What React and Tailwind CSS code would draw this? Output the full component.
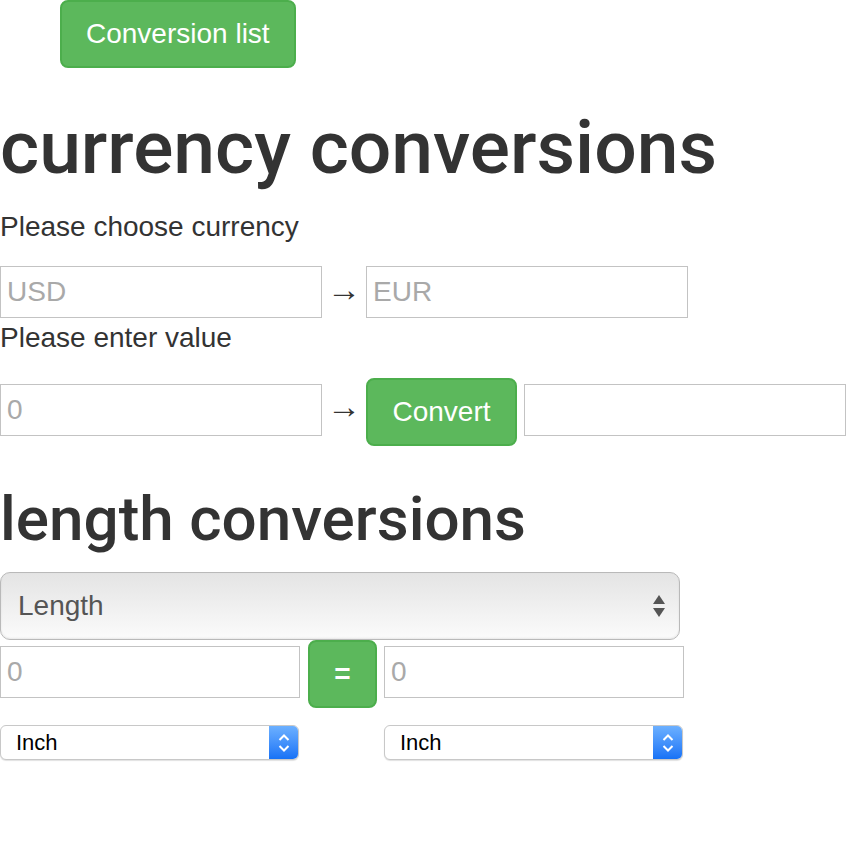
import React from "react";

const font = { fontFamily: '"Liberation Sans", Arial, sans-serif' };
const headFont = { fontFamily: 'Roboto, "Liberation Sans", Arial, sans-serif' };

function UpDown() {
  return (
    <svg width="14" height="26" viewBox="0 0 14 26">
      <path d="M7 2 L13 11 L1 11 Z" fill="#555" />
      <path d="M1 15 L13 15 L7 24 Z" fill="#555" />
    </svg>
  );
}

function Chevrons() {
  return (
    <svg width="14" height="22" viewBox="0 0 14 22">
      <path d="M2.5 8 L7 3.5 L11.5 8" fill="none" stroke="white" strokeWidth="2" />
      <path d="M2.5 14 L7 18.5 L11.5 14" fill="none" stroke="white" strokeWidth="2" />
    </svg>
  );
}

function InchSelect() {
  return (
    <div className="flex h-[35px] w-[299px] items-center overflow-hidden rounded-[6px] border border-[#c8c8c8] bg-white shadow-[0_1px_1px_rgba(0,0,0,0.12)]">
      <span className="flex-1 pl-[15px] text-[22px] text-black">Inch</span>
      <div className="flex h-full w-[29px] items-center justify-center bg-gradient-to-b from-[#6cb0ff] to-[#1672f6]">
        <Chevrons />
      </div>
    </div>
  );
}

export default function App() {
  return (
    <div className="min-h-[866px] w-[858px] bg-white text-[#333]" style={font}>
      <div className="pl-[60px]">
        <button className="h-[68px] rounded-[8px] border-2 border-[#4cae4c] bg-[#5cb85c] px-[24px] text-[28px] leading-[40px] text-white">
          Conversion list
        </button>
      </div>

      <h1 className="mt-[40px] mb-[20px] text-[75px] font-medium leading-[79px] text-[#333]" style={headFont}>
        currency conversions
      </h1>
      <div className="text-[28px] leading-[40px]">Please choose currency</div>
      <div className="mt-[19px] flex items-center">
        <div className="flex h-[52px] w-[322px] items-center border border-[#c3c3c3] pl-[6px] text-[28px] text-[#a9a9a9]">USD</div>
        <span className="mb-[6px] w-[44px] text-center text-[34px] leading-[40px]">→</span>
        <div className="flex h-[52px] w-[322px] items-center border border-[#c3c3c3] pl-[6px] text-[28px] text-[#a9a9a9]">EUR</div>
      </div>
      <div className="text-[28px] leading-[40px]">Please enter value</div>
      <div className="mt-[20px] flex items-start">
        <div className="mt-[6px] flex h-[52px] w-[322px] items-center border border-[#c3c3c3] pl-[6px] text-[28px] text-[#a9a9a9]">0</div>
        <span className="mt-[8px] w-[44px] text-center text-[34px] leading-[40px]">→</span>
        <button className="h-[68px] w-[151px] rounded-[8px] border-2 border-[#4cae4c] bg-[#5cb85c] text-[28px] leading-[40px] text-white">
          Convert
        </button>
        <div className="ml-[7px] mt-[6px] h-[52px] w-[322px] border border-[#c3c3c3]"></div>
      </div>

      <h2 className="mt-[40px] mb-[20px] text-[62px] font-medium leading-[66px] text-[#333]" style={headFont}>
        length conversions
      </h2>
      <div className="flex h-[68px] w-[680px] items-center rounded-[10px] border border-[#b9b9b9] bg-gradient-to-b from-[#e4e4e4] to-[#fbfbfb] pr-[13px] pl-[17px] shadow-[inset_0_-1px_2px_rgba(0,0,0,0.08)]">
        <span className="flex-1 text-[28px] text-[#555]">Length</span>
        <UpDown />
      </div>
      <div className="flex items-start">
        <div className="mt-[6px] flex h-[52px] w-[300px] items-center border border-[#c3c3c3] pl-[6px] text-[28px] text-[#a9a9a9]">0</div>
        <button className="ml-[8px] h-[68px] w-[69px] rounded-[8px] border-2 border-[#4cae4c] bg-[#5cb85c] text-[28px] font-bold leading-[40px] text-white">
          =
        </button>
        <div className="ml-[7px] mt-[6px] flex h-[52px] w-[300px] items-center border border-[#c3c3c3] pl-[6px] text-[28px] text-[#a9a9a9]">0</div>
      </div>
      <div className="mt-[17px] flex gap-[85px]">
        <InchSelect />
        <InchSelect />
      </div>
    </div>
  );
}
